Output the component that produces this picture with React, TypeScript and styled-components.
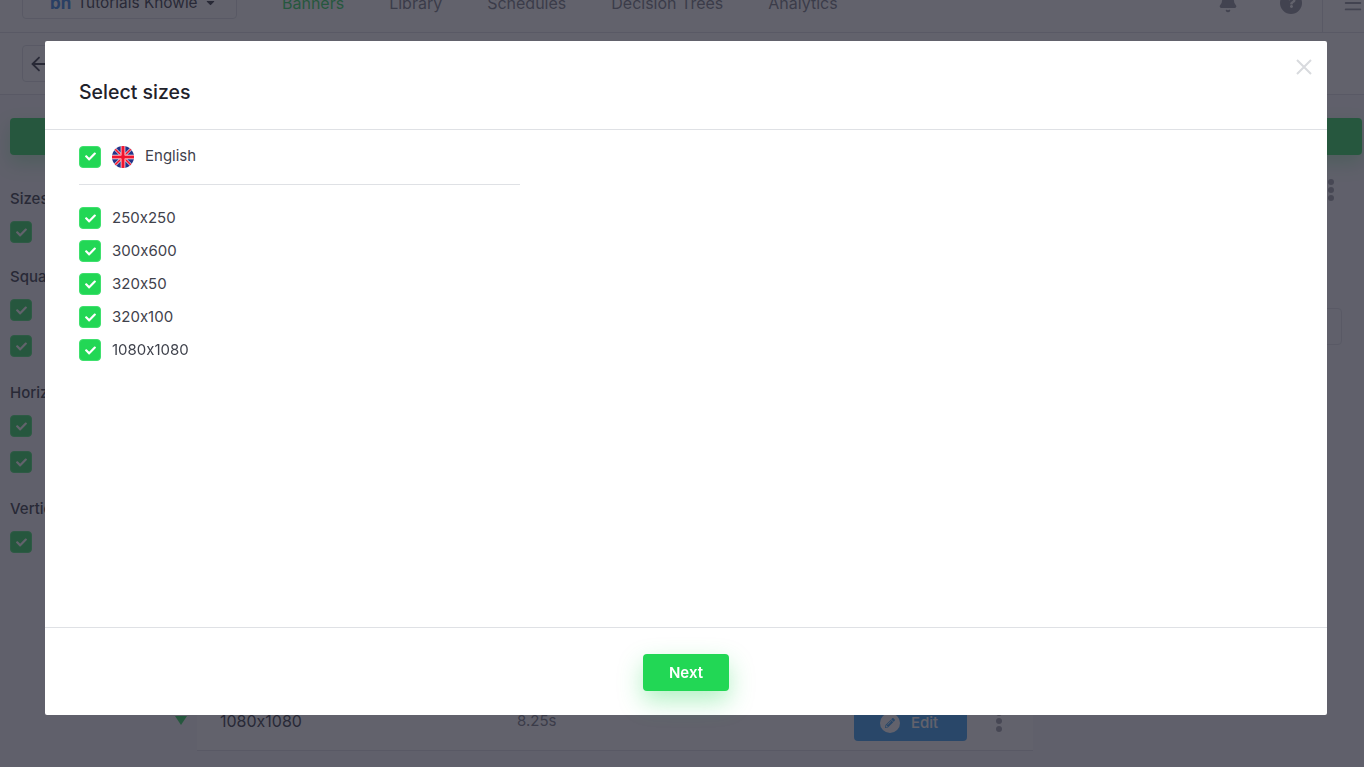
import { createGlobalStyle, styled } from "styled-components";
import { ArrowLeft, Bell, Menu } from "lucide-react";
import { FaCaretDown, FaCheck, FaPencilAlt, FaQuestion } from "react-icons/fa";

const GlobalStyle = createGlobalStyle`
  html, body {
    margin: 0;
    height: 100%;
    overflow: hidden;
    font-family: Inter, "Noto Sans", sans-serif;
    font-feature-settings: "calt" 0;
    background: #f6f7f9;
    color: #2a2d3a;
  }
  * { box-sizing: border-box; }
`;

const Page = styled.div`
  height: 767px;
  overflow: hidden;
`;

const Header = styled.header`
  display: flex;
  align-items: center;
  height: 60px;
  margin-top: -27px;
  padding-left: 22px;
  background: #fff;
  border-bottom: 1px solid #dcdfe4;
`;

const TeamSelect = styled.div`
  display: flex;
  align-items: center;
  gap: 6px;
  width: 215px;
  height: 32px;
  padding-left: 27px;
  border: 1px solid #dcdfe4;
  border-radius: 4px;
  font-size: 15.4px;
`;

const TeamLogo = styled.span`
  color: #2f7de1;
  font-size: 17px;
  font-weight: 700;
`;

const Nav = styled.nav`
  display: flex;
  gap: 45px;
  margin-left: 45px;
  flex: 1;
`;

const NavLink = styled.span<{ $active?: boolean }>`
  font-size: 16px;
  color: ${(props) => (props.$active ? "#22d755" : "#70737f")};
`;

const HeaderIcons = styled.div`
  display: flex;
  align-items: center;
  gap: 42px;
  height: 100%;
  color: #8a8d98;
`;

const HelpIcon = styled.span`
  display: flex;
  align-items: center;
  justify-content: center;
  width: 22px;
  height: 22px;
  border-radius: 50%;
  background: #8a8d98;
  color: #fff;
  font-size: 11px;
`;

const MenuBox = styled.div`
  display: flex;
  align-items: center;
  height: 100%;
  padding-left: 19px;
  margin-left: -22px;
  border-left: 1px solid #dcdfe4;
  color: #8a8d98;
  width: 42px;
  flex-shrink: 0;
`;

const SubBar = styled.div`
  display: flex;
  align-items: center;
  height: 62px;
  padding-left: 22px;
  background: #fff;
  border-bottom: 1px solid #dcdfe4;
`;

const BackButton = styled.button`
  display: flex;
  align-items: center;
  width: 40px;
  height: 37px;
  padding: 0 0 0 5px;
  background: none;
  border: 1px solid #dcdfe4;
  border-radius: 4px;
  color: #2a2d3a;
`;

const GreenBar = styled.div`
  height: 37px;
  margin: 23px 2px 0 10px;
  background: #22d755;
  border-radius: 4px;
  box-shadow: 0 8px 18px rgba(34, 215, 85, 0.3);
`;

const Main = styled.main`
  display: flex;
  height: 612px;
`;

const Sidebar = styled.aside`
  width: 175px;
  padding: 33px 0 0 10px;
  flex-shrink: 0;
`;

const SideGroup = styled.div`
  display: flex;
  flex-direction: column;
  gap: 14px;
  margin-bottom: 25px;

  &:first-child {
    margin-bottom: 23px;
  }
`;

const SideTitle = styled.div`
  height: 22px;
  margin-bottom: -3px;
  font-size: 15px;
  font-weight: 500;
  line-height: 22px;
`;

const Checkbox = styled.span`
  display: flex;
  align-items: center;
  justify-content: center;
  flex-shrink: 0;
  width: 22px;
  height: 22px;
  background: #22d755;
  border: 1px solid #3fe06e;
  border-radius: 4px;
  color: #fff;
  font-size: 11px;
`;

const ListColumn = styled.section`
  display: flex;
  align-items: flex-start;
  flex: 1;
  padding-top: 547px;
`;

const ExpandMark = styled.span`
  width: 0;
  height: 0;
  margin: 14px 10px 0 0;
  border-left: 6px solid transparent;
  border-right: 6px solid transparent;
  border-top: 9px solid #22d755;
`;

const SizeRow = styled.div`
  display: flex;
  align-items: flex-start;
  width: 836px;
  height: 49px;
  padding: 9px 0 0 23px;
  background: #fff;
  border-bottom: 1px solid #dcdfe4;
`;

const SizeName = styled.span`
  width: 297px;
  font-size: 16px;
`;

const SizeTime = styled.span`
  width: 337px;
  font-size: 15px;
  color: #70737f;
`;

const EditButton = styled.button`
  display: flex;
  align-items: center;
  gap: 11px;
  width: 113px;
  height: 37px;
  margin-top: -7px;
  padding: 0 0 0 26px;
  background: #2f9df4;
  border: none;
  border-radius: 4px;
  color: #fff;
  font: 500 15px Inter, sans-serif;
`;

const EditIcon = styled.span`
  display: flex;
  align-items: center;
  justify-content: center;
  width: 20px;
  height: 20px;
  border-radius: 50%;
  background: #fff;
  color: #2f9df4;
  font-size: 10px;
`;

const Dots = styled.span`
  display: flex;
  flex-direction: column;
  gap: 2px;
  width: 6px;

  i {
    width: 6px;
    height: 6px;
    border-radius: 50%;
    background: #9a9da8;
  }
`;

const RowDots = styled(Dots)`
  margin: -1px 0 0 29px;
`;

const RightPanel = styled.aside`
  display: flex;
  flex-direction: column;
  align-items: flex-end;
  flex-shrink: 0;
  width: 156px;
  padding-top: 24px;
`;

const PanelDots = styled(Dots)`
  margin-right: 30px;
`;

const PanelBox = styled.div`
  width: 40px;
  height: 37px;
  margin: 107px 22px 0 0;
  border: 1px solid #dcdfe4;
  border-radius: 4px;
`;

const Overlay = styled.div`
  position: fixed;
  inset: 0;
  padding: 41px 37px 52px 45px;
  background: rgba(40, 40, 54, 0.73);
`;

const Modal = styled.div`
  display: flex;
  flex-direction: column;
  position: relative;
  height: 100%;
  background: #fff;
  border-radius: 2px;
`;

const ModalHeader = styled.div`
  display: flex;
  align-items: center;
  height: 89px;
  padding: 13px 34px 0;
  border-bottom: 1px solid #dfe1e5;
`;

const ModalTitle = styled.h2`
  margin: 0;
  font-size: 19.5px;
  font-weight: 500;
  color: #1f222b;
`;

const CloseButton = styled.button`
  position: absolute;
  top: 18px;
  right: 15px;
  display: flex;
  width: 16px;
  height: 16px;
  padding: 0;
  background: none;
  border: none;
`;

const ModalBody = styled.div`
  flex: 1;
  padding: 0 34px;
`;

const LanguageRow = styled.div`
  display: flex;
  align-items: center;
  width: 441px;
  height: 55px;
  padding-bottom: 1px;
  border-bottom: 1px solid #dfe1e5;
`;

const Flag = styled.svg`
  width: 22px;
  height: 22px;
  margin-left: 11px;
`;

const LanguageName = styled.span`
  margin: -2px 0 0 11px;
  font-size: 15px;
  color: #3f424c;
`;

const SizeList = styled.div`
  display: flex;
  flex-direction: column;
  gap: 11px;
  padding-top: 22px;
`;

const SizeOption = styled.label`
  display: flex;
  align-items: center;
  gap: 11px;
  font-size: 15px;
  line-height: 20px;
  color: #3f424c;
`;

const ModalFooter = styled.div`
  display: flex;
  justify-content: center;
  height: 88px;
  padding-top: 26px;
  border-top: 1px solid #dfe1e5;
`;

const NextButton = styled.button`
  width: 86px;
  height: 37px;
  background: #22d755;
  border: none;
  border-radius: 4px;
  box-shadow: 0 10px 24px rgba(34, 215, 85, 0.35);
  color: #fff;
  font: 600 15px Inter, sans-serif;
`;

const Tick = () => (
  <Checkbox>
    <FaCheck />
  </Checkbox>
);

const ThreeDots = () => (
  <>
    <i />
    <i />
    <i />
  </>
);

const UnionJack = () => (
  <Flag viewBox="0 0 22 22">
    <defs>
      <clipPath id="flag-circle">
        <circle cx="11" cy="11" r="11" />
      </clipPath>
    </defs>
    <g clipPath="url(#flag-circle)">
      <rect width="22" height="22" fill="#243488" />
      <path d="M0 0 22 22M22 0 0 22" stroke="#fff" strokeWidth="2.8" />
      <path d="M0 0 22 22M22 0 0 22" stroke="#f0142f" strokeWidth="1.6" />
      <path d="M11 0V22M0 11H22" stroke="#fff" strokeWidth="4.6" />
      <path d="M11 0V22M0 11H22" stroke="#f0142f" strokeWidth="3.2" />
    </g>
  </Flag>
);

const sizes = ["250x250", "300x600", "320x50", "320x100", "1080x1080"];

export default function App() {
  return (
    <Page>
      <GlobalStyle />
      <Header>
        <TeamSelect>
          <TeamLogo>bh</TeamLogo>
          Tutorials Knowle
          <FaCaretDown size={13} />
        </TeamSelect>
        <Nav>
          <NavLink $active>Banners</NavLink>
          <NavLink>Library</NavLink>
          <NavLink>Schedules</NavLink>
          <NavLink>Decision Trees</NavLink>
          <NavLink>Analytics</NavLink>
        </Nav>
        <HeaderIcons>
          <Bell size={20} fill="currentColor" />
          <HelpIcon>
            <FaQuestion />
          </HelpIcon>
          <MenuBox>
            <Menu size={22} />
          </MenuBox>
        </HeaderIcons>
      </Header>
      <SubBar>
        <BackButton>
          <ArrowLeft size={22} />
        </BackButton>
      </SubBar>
      <GreenBar />
      <Main>
        <Sidebar>
          <SideGroup>
            <SideTitle>Sizes</SideTitle>
            <Tick />
          </SideGroup>
          <SideGroup>
            <SideTitle>Square</SideTitle>
            <Tick />
            <Tick />
          </SideGroup>
          <SideGroup>
            <SideTitle>Horizontal</SideTitle>
            <Tick />
            <Tick />
          </SideGroup>
          <SideGroup>
            <SideTitle>Vertical</SideTitle>
            <Tick />
          </SideGroup>
        </Sidebar>
        <ListColumn>
          <ExpandMark />
          <SizeRow>
            <SizeName>1080x1080</SizeName>
            <SizeTime>8.25s</SizeTime>
            <EditButton>
              <EditIcon>
                <FaPencilAlt />
              </EditIcon>
              Edit
            </EditButton>
            <RowDots>
              <ThreeDots />
            </RowDots>
          </SizeRow>
        </ListColumn>
        <RightPanel>
          <PanelDots>
            <ThreeDots />
          </PanelDots>
          <PanelBox />
        </RightPanel>
      </Main>
      <Overlay>
        <Modal>
          <CloseButton aria-label="Close">
            <svg width="16" height="16" viewBox="0 0 16 16">
              <path d="M1 1 15 15M15 1 1 15" stroke="#d8dade" strokeWidth="2" />
            </svg>
          </CloseButton>
          <ModalHeader>
            <ModalTitle>Select sizes</ModalTitle>
          </ModalHeader>
          <ModalBody>
            <LanguageRow>
              <Tick />
              <UnionJack />
              <LanguageName>English</LanguageName>
            </LanguageRow>
            <SizeList>
              {sizes.map((size) => (
                <SizeOption key={size}>
                  <Tick />
                  <span>{size}</span>
                </SizeOption>
              ))}
            </SizeList>
          </ModalBody>
          <ModalFooter>
            <NextButton>Next</NextButton>
          </ModalFooter>
        </Modal>
      </Overlay>
    </Page>
  );
}
